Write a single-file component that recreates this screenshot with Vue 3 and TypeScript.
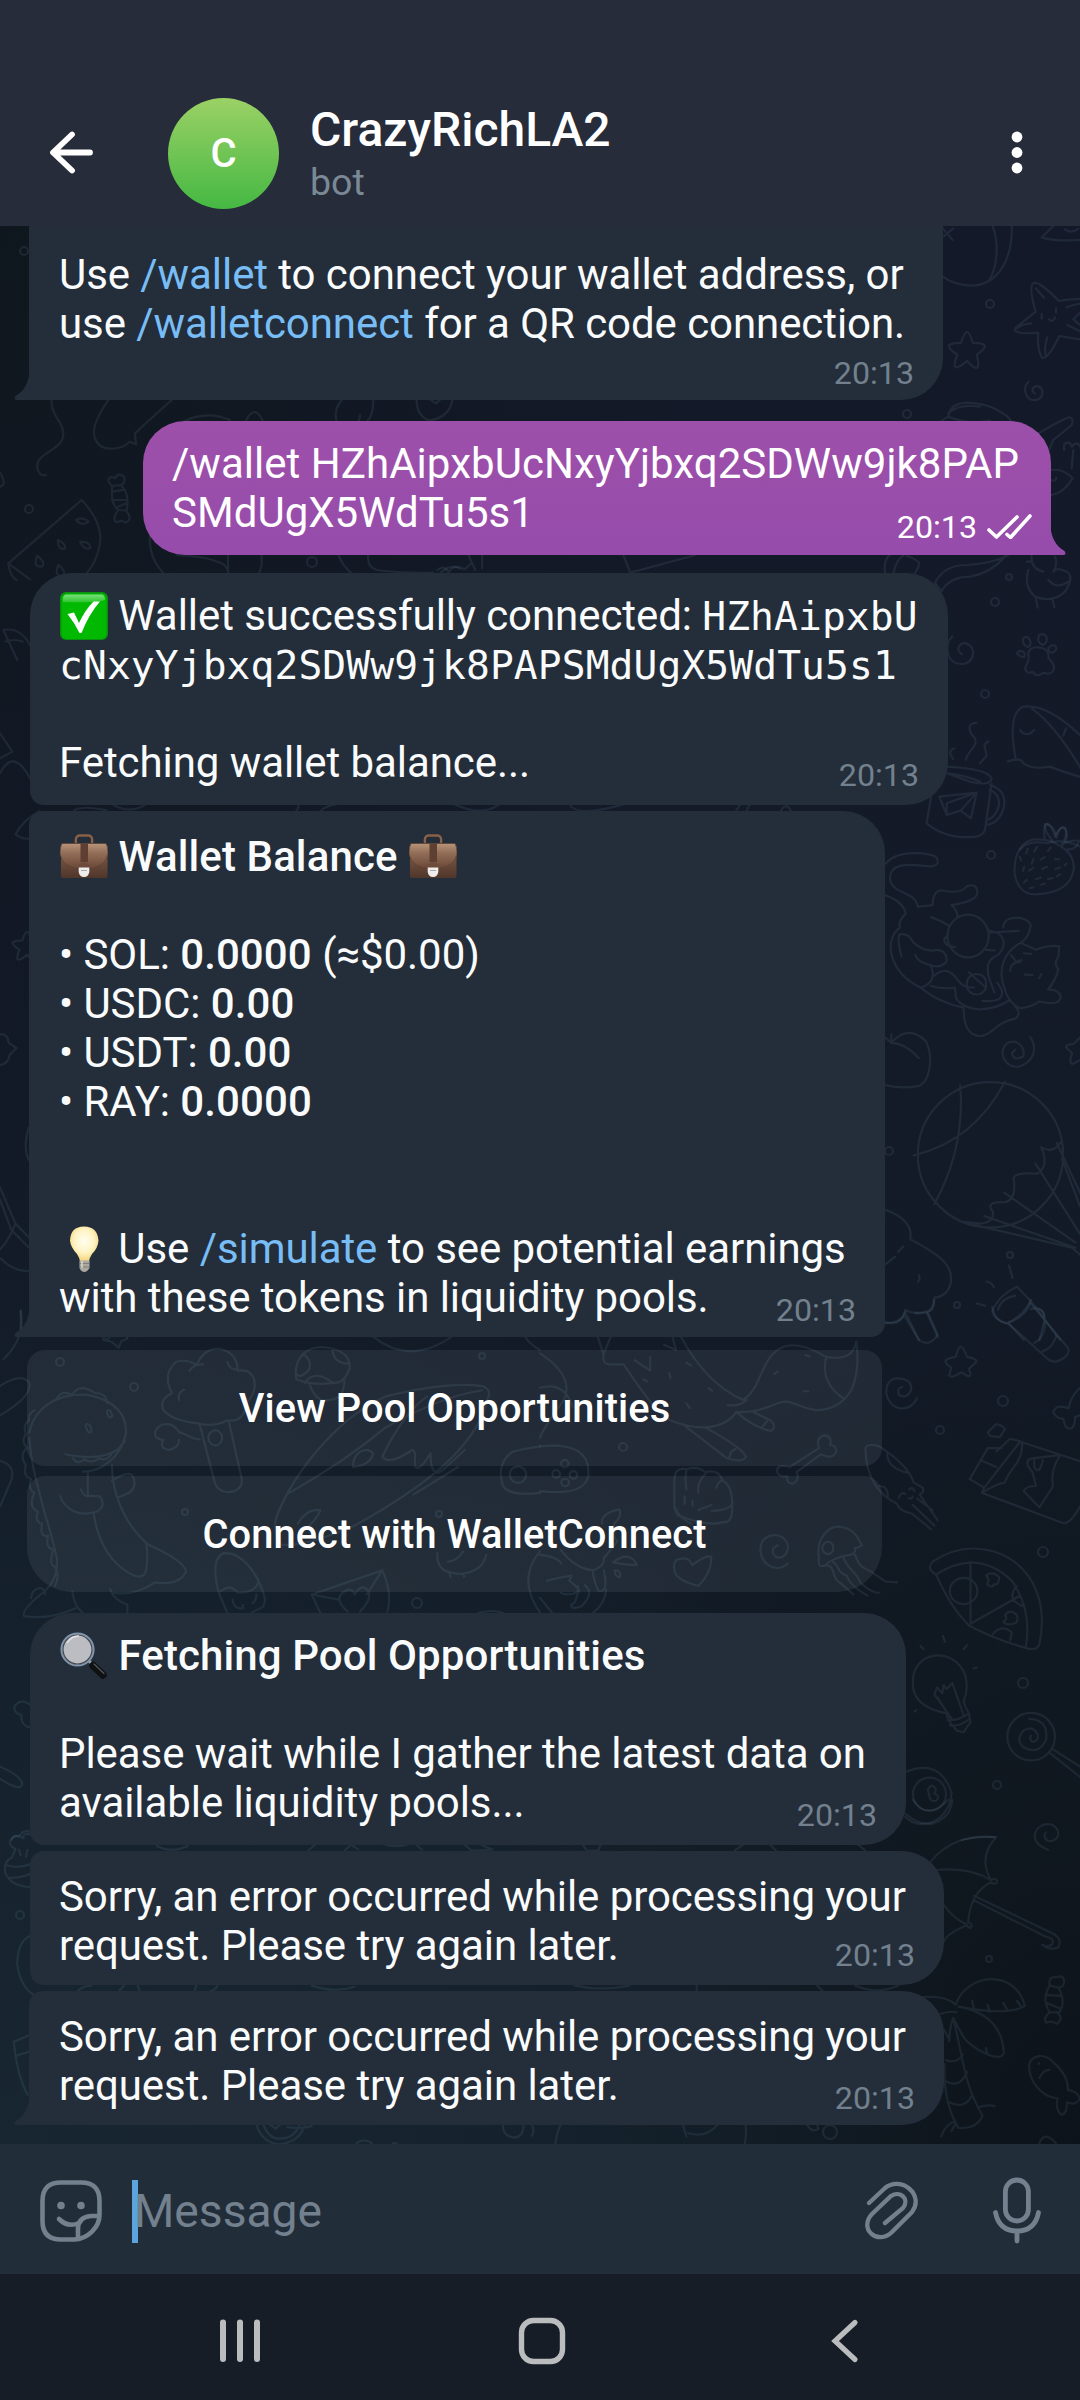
<script setup lang="ts">
type Kind = 'text' | 'bold' | 'link' | 'mono' | 'emoji'
interface Segment { kind: Kind; value: string }
interface Message {
  id: string
  lines: Segment[][]
  tail?: boolean
  outgoing?: boolean
  actions?: string[]
}

const t = (value: string): Segment => ({ kind: 'text', value })
const b = (value: string): Segment => ({ kind: 'bold', value })
const link = (value: string): Segment => ({ kind: 'link', value })
const mono = (value: string): Segment => ({ kind: 'mono', value })
const emoji = (value: string): Segment => ({ kind: 'emoji', value })

const time = '20:13'
const errorLines = [[t('Sorry, an error occurred while processing your')], [t('request. Please try again later.')]]

const messages: Message[] = [
  {
    id: 'intro', tail: true,
    lines: [
      [t('Use '), link('/wallet'), t(' to connect your wallet address, or')],
      [t('use '), link('/walletconnect'), t(' for a QR code connection.')],
    ],
  },
  {
    id: 'command', outgoing: true, tail: true,
    lines: [[t('/wallet HZhAipxbUcNxyYjbxq2SDWw9jk8PAP')], [t('SMdUgX5WdTu5s1')]],
  },
  {
    id: 'connected',
    lines: [
      [emoji('check'), t(' Wallet successfully connected: '), mono('HZhAipxbU')],
      [mono('cNxyYjbxq2SDWw9jk8PAPSMdUgX5WdTu5s1')],
      [],
      [t('Fetching wallet balance...')],
    ],
  },
  {
    id: 'balance', tail: true,
    lines: [
      [emoji('case'), b(' Wallet Balance '), emoji('case')],
      [],
      [t('• SOL: '), b('0.0000'), t(' (≈$0.00)')],
      [t('• USDC: '), b('0.00')],
      [t('• USDT: '), b('0.00')],
      [t('• RAY: '), b('0.0000')],
      [],
      [],
      [emoji('bulb'), t(' Use '), link('/simulate'), t(' to see potential earnings')],
      [t('with these tokens in liquidity pools.')],
    ],
    actions: ['View Pool Opportunities', 'Connect with WalletConnect'],
  },
  {
    id: 'pools',
    lines: [
      [emoji('lens'), b(' Fetching Pool Opportunities')],
      [],
      [t('Please wait while I gather the latest data on')],
      [t('available liquidity pools...')],
    ],
  },
  { id: 'error-first', lines: errorLines },
  { id: 'error-last', tail: true, lines: errorLines },
]

interface Doodle { at: string; d: string }
const spiral = 'M0 2C-6 -2 -2 -9 4 -7C12 -4 11 8 1 10C-13 11 -16 -6 -8 -13'
const star = 'M0 -15Q2 -15 5 -6Q15 -6 15 -3Q14 0 8 4Q11 14 8 15Q5 15 0 9Q-8 16 -10 14Q-11 11 -8 4Q-16 -1 -15 -4Q-13 -6 -5 -6Q-2 -15 0 -15Z'

// Wallpaper line art, grouped by region of the canvas.
const doodles: Doodle[] = [
  {
    at: 'translate(860 220) scale(.3333)',
    d: 'M455 10C460 110 420 190 340 197Q285 197 248 170M398 18C418 70 412 140 388 180M248 25l30 35M250 50l30-25M580 18L545 52Q590 65 660 60M615 28q20 15 40-2M520 190Q535 180 597 243Q640 235 665 238M520 190Q505 200 527 275L465 325Q460 345 535 338Q530 380 545 412Q560 425 598 348L670 360M527 205l25 28M470 325q20-14 45-15M562 352q-10 25-5 55M545 282v14M588 264v14M567 298q14 12 18-6M620 262q25-10 45-12M640 298l20-20M640 298l30 25M622 315l45 22',
  },
  {
    at: 'translate(880 390) scale(.3333)',
    d: 'M180 95L205 80Q210 40 260 38C330 38 385 75 395 95M205 70Q235 40 300 50M205 80Q270 105 330 92M475 130Q560 80 570 82Q582 85 575 105L520 150L505 185M553 180q-5-25 15-22l8 12q15-20 25 0M580 180l-5 55M513 270q15 5 16-7M515 240Q550 235 578 265Q550 310 515 315M165 580Q190 525 260 525Q340 520 385 495M165 580L185 603Q210 560 270 560Q330 550 375 500M15 550Q10 510 30 495M40 550Q50 505 70 498M80 498Q120 510 118 525L105 550M455 495Q450 535 490 545M525 500Q535 520 520 545M440 515l15 0M445 540Q430 590 465 620Q520 640 555 605Q585 560 560 545Q530 530 520 545M505 570Q530 600 565 575M468 628l5 25M518 630l5 22M458 845Q440 855 435 835Q450 805 445 795Q445 770 475 772Q510 775 505 805Q530 825 518 845Q510 855 490 848Q470 865 458 845ZM430 745q-5 20 15 26q12-10 2-25q-8-10-17-1ZM478 735q-10 22 10 30q18-10 10-27q-8-10-20-3ZM505 775q0 15 15 12q15-10 5-20q-15-3-20 8ZM410 790q10-14 23-1q5 15-10 11ZM408 1110Q380 970 430 950Q500 940 600 1035M455 955Q530 1010 605 1140M383 1115Q420 1100 430 1120Q460 1140 510 1130Q560 1150 600 1160M420 1020Q440 1045 462 1020M558 1015l-8 22M290 998C255 1000 270 1030 285 1045C295 1070 260 1085 258 1110M325 1055C300 1065 325 1085 318 1100L300 1120M223 1075q-15 5-12 18l8 14M195 1130Q320 1135 335 1165Q330 1190 270 1175L200 1150M205 1150Q255 1155 300 1175M155 1210L140 1300Q200 1350 290 1340Q310 1335 315 1320L335 1180M330 1185Q380 1200 372 1250Q360 1300 318 1305M328 1200Q362 1210 356 1250Q345 1285 320 1290M178 1220L290 1208L273 1285L242 1262L200 1275ZM290 1208L200 1240L200 1275M290 1208L242 1262M420 1380Q440 1350 500 1360Q550 1345 600 1370M520 1355Q490 1320 495 1302Q515 1300 525 1340Q540 1305 555 1315Q565 1335 545 1360',
  },
  {
    at: 'translate(0 390) scale(.3333)',
    d: 'M155 30C150 80 200 100 188 145C175 185 105 190 112 235Q118 260 138 255M325 30Q270 110 285 145C300 190 370 180 388 155L408 163L405 130Q470 70 515 30M550 95Q620 60 690 90M738 92Q765 40 788 92M1010 95Q1000 60 1025 30M1120 30Q1120 80 1100 95M1080 75q0 15-8 20M1250 30Q1250 80 1290 92Q1350 80 1357 30M1290 28l18 12l12-10M325 270Q330 255 345 265Q355 245 372 260Q378 280 362 285L335 288Q325 275 325 270ZM337 288Q330 340 355 360L380 362Q390 310 362 285M338 305l36-6M335 330l45 0M355 350l28-12M352 365Q335 390 350 397Q365 390 378 398Q400 385 378 362M25 520L245 330Q310 400 300 460Q290 520 255 555M25 520Q30 560 50 570M25 520L90 568M228 390q20-12 38 5q-20 15-38-5ZM173 450q25 10 22 25q-20 8-22-25ZM240 455q30 0 32 18q-20 10-32-18ZM112 497q25 20 15 32q-30 5-15-32ZM175 525q25 20 15 32q-30 5-15-32ZM0 248q15 25 10 35l-10 8M450 440Q445 500 490 550M530 495Q620 500 650 515Q680 520 685 548M684 495v50M785 495v30q-3 15-8 23M1015 495Q1030 530 1055 550M1105 495Q1100 530 1130 540Q1200 550 1300 548M1313 540q20-18 35 10M1345 548q15-25 35-12',
  },
  {
    at: 'translate(0 400) scale(.6888 .3333)',
    d: 'M5 690Q30 680 45 740M5 690L25 780M8 725q15-10 25 0M0 1120Q20 1040 45 1140M0 1000l18 55L0 1075M905 465L915 518L1010 465M640 518q15-30 35-10l10-20M680 465l10 45M700 465l0 40',
  },
  {
    at: 'translate(0 800) scale(.3444)',
    d: 'M45 100Q65 60 115 32M45 100Q65 115 85 112M215 30Q240 15 310 30M330 15Q380 40 420 15M860 32Q870 20 865 12M930 32Q950 15 980 12M1320 12Q1400 50 1450 12M0 680Q25 680 25 705L48 720L28 740Q25 765 0 770M84 950Q65 1010 84 1045M0 1125L45 1230Q25 1280 0 1305M45 1230L84 1270M0 1160L30 1240M0 1330Q40 1370 84 1368M30 1245L84 1300M60 1485v60M300 1560q40-30 70 0',
  },
  {
    at: 'translate(540 800) scale(.3444)',
    d: 'M85 12q20 40 160 0M570 30l12-18M600 30l10-18M700 30q15-25 28 0M1465 110Q1460 70 1475 70Q1495 80 1500 110Q1510 70 1525 82Q1540 110 1512 135Q1480 110 1430 115Q1375 130 1378 215Q1390 275 1440 274Q1540 270 1550 200Q1550 155 1512 135M1512 135Q1530 115 1565 118Q1560 145 1530 143M1412 155l4-14M1435 150l8-14M1475 148l8-10M1397 175l-4-10M1428 185l5-14M1453 174l12-8M1495 172h12M1402 206l4-12M1420 205l12-8M1458 200l14-6M1497 200l12-4M1524 190l5-6M1440 230l14-5M1475 229l14-2M1405 240l8-8M1422 256l10-2M1455 246l10-3M1500 222l10-6M1003 185C1040 140 1130 155 1150 165Q1165 190 1135 193C1070 185 1010 180 1017 235C1030 275 1090 265 1097 310L1140 305Q1140 265 1165 262Q1220 275 1240 250Q1270 240 1270 270Q1265 295 1195 305Q1215 325 1212 340M1003 277Q1055 295 1062 330Q1040 350 1045 370C995 410 1015 500 1105 545Q1155 530 1135 480Q1095 470 1090 450M1050 455Q1035 400 1045 390Q1070 385 1085 415Q1120 445 1155 435Q1185 440 1180 470Q1160 490 1135 480M1145 510C1180 480 1200 505 1215 525Q1230 545 1260 545M1135 540Q1170 550 1205 545L1208 575Q1225 605 1280 608Q1330 605 1365 580M1135 340Q1165 350 1188 365M1205 427Q1175 425 1173 405L1185 390M1183 395a60 62 0 1 0 120 0a60 62 0 1 0-120 0M1305 385L1390 380M1295 435l25 2M1305 380C1360 385 1355 440 1320 455Q1290 470 1305 520L1320 560M1345 370C1345 330 1420 335 1425 365Q1420 400 1395 415C1350 440 1325 490 1350 550Q1360 590 1395 605Q1430 600 1450 585Q1510 600 1512 570Q1505 550 1475 550Q1500 520 1505 490Q1490 475 1505 455L1508 425Q1480 420 1440 435Q1410 420 1395 415M1368 450l15 20l15-5M1395 470q-30 0-30 28M1405 445l22 2M1408 507l22 1M1450 517l6-12M1105 545Q1160 590 1230 603M1230 605Q1230 690 1285 685C1320 675 1325 645 1380 635Q1400 620 1380 600M1240 535a28 25 0 1 0 55 0a28 25 0 1 0-55 0M1245 500l50 45M1285 583Q1350 590 1340 550L1328 530M1003 690L1020 705Q1070 650 1120 700C1145 750 1130 820 1100 830Q1050 840 1003 828M1020 680V705Q1060 705 1100 750M1423 688C1460 740 1400 790 1365 770C1325 745 1345 695 1380 702Q1410 715 1403 745Q1375 760 1370 735L1380 725M1568 690L1550 708Q1525 710 1527 718L1545 735Q1535 760 1545 767L1568 755M1097 1030a211 211 0 1 0 422 0a211 211 0 1 0-422 0M1220 828Q1235 1010 1145 1173M1350 818Q1260 990 1085 1032M1515 990Q1490 1030 1455 1008Q1480 1060 1445 1085Q1375 1080 1375 1100Q1385 1160 1350 1168Q1290 1165 1315 1195Q1320 1225 1280 1230L1230 1225M1500 995L1568 1140M1438 1055L1568 1260M1348 1140L1555 1285M1290 1208L1555 1300M1235 1228Q1500 1290 1545 1300L1568 1320M1515 1040L1568 1180M1003 1190Q1085 1220 1075 1275C1160 1320 1200 1350 1193 1400Q1185 1440 1145 1445Q1145 1490 1120 1485Q1085 1495 1060 1480Q1055 1520 1003 1518M1060 1500L1100 1568M1123 1488L1155 1560M1100 1380q5 10-2 18M1003 1348l28-22M1040 1312l15-16M1362 1352l10 36M1296 1398q15 2 22 16M1268 1462l24 6M1385 1413Q1330 1440 1313 1485Q1320 1510 1355 1520Q1415 1500 1425 1455ZM1330 1480Q1340 1445 1380 1440M1425 1478Q1465 1470 1465 1510M1425 1455L1510 1568M1360 1520L1405 1568M1465 1510L1450 1568',
  },
  {
    at: 'translate(0 1300) scale(.3444)',
    d: 'M60 30Q75 110 10 172M300 115q15 0 18-8M300 115L325 122L345 138L352 120L370 112M1085 108Q1190 190 1310 108M1525 108Q1540 130 1568 145M0 250Q60 210 85 240Q95 280 0 335M0 467Q50 480 30 530L0 600M85 385C100 310 170 270 250 275C340 290 370 340 365 390C350 460 290 500 240 498M165 285Q180 260 210 275Q230 240 275 270Q310 270 312 300M190 448Q290 470 345 432L362 410M212 460Q225 480 245 463Q265 475 290 460Q310 470 325 445M100 320Q80 330 85 350Q65 360 75 390Q60 410 78 430Q55 450 75 480Q65 510 90 520Q80 550 100 560Q80 600 110 615Q100 645 122 650Q115 690 140 685Q130 720 155 725Q140 770 160 775Q175 800 160 830M85 400C90 480 110 540 130 620Q150 680 165 750Q170 810 130 845Q60 900 70 918Q140 930 220 895M325 480C325 560 360 650 430 710Q540 760 540 790Q520 830 450 820Q390 860 330 850M255 500v68L290 570Q310 600 280 615C230 630 190 610 175 570M235 550q10 25 25 18M325 525Q370 495 385 510Q400 540 375 560L345 573M272 620Q290 740 370 790Q420 820 425 780Q430 740 425 710M210 845Q215 890 240 908M320 840Q330 870 370 885V908M90 865q5-30 30-28q15 8 10 18M248 365q5-10 14 0l4 15q-5 10-12 0ZM310 325q5-10 12 0l4 12q-5 8-12 0ZM575 358Q500 350 475 320Q460 290 500 270Q470 220 510 180Q540 170 570 188Q600 130 650 145Q690 160 690 205Q740 200 740 250Q735 280 715 300Q710 355 660 350Q620 370 575 358M550 205q15-20 40-18M520 290q-5-20 15-30M660 180q5 20 25 22M580 362L625 535Q640 565 680 555Q705 545 702 520L665 355M605 400a20 22 0 1 0 40 0a20 22 0 1 0-40 0M580 405C540 400 530 380 520 385Q505 355 470 362Q440 380 455 400Q475 410 475 405Q460 430 490 435Q520 430 520 405M860 230C850 160 900 130 950 138Q1020 150 1015 200Q1000 240 975 240Q910 250 860 230ZM880 155Q910 180 895 205Q870 230 862 215M965 145Q970 185 1012 185M885 240Q915 200 965 240M900 248Q920 300 955 290Q1000 290 1000 230M800 640C830 540 960 350 1120 280Q1300 235 1400 250Q1430 260 1415 290C1380 440 1200 560 1030 655Q880 720 815 710Q795 690 800 640M840 560Q1000 470 1120 370Q1280 280 1400 262M1025 485Q1025 440 1065 435Q1090 440 1080 455Q1070 480 1025 485ZM1110 455Q1170 330 1240 280M1110 455Q1130 480 1190 440Q1200 430 1205 445V475Q1205 500 1230 475L1250 445Q1250 520 1285 495L1350 435M865 650Q890 605 930 610Q920 640 870 680M1200 565L1330 485M1460 540Q1440 470 1490 440Q1530 430 1568 425M1460 540Q1480 570 1568 560M1480 507a24 24 0 1 0 48 0a24 24 0 1 0-48 0M635 850Q610 750 650 735C700 730 750 790 770 870L765 890L730 908M635 850Q670 820 690 850Q740 850 750 820M635 850L660 908M675 870q5 30 30 25V885M745 855q-2 20-12 25M905 855L1110 785Q1140 850 1125 905M905 855L930 908M905 855L985 870M1110 785L1065 855M1010 905Q970 870 995 850Q1020 830 1030 855Q1050 820 1070 845Q1080 870 1045 905M1270 735C1265 790 1310 795 1340 795Q1400 790 1412 740M1300 760q25 0 45-30M1305 795l3 10M1345 795l3 8M1568 730Q1500 810 1568 908M1390 908q40-10 70 0M85 1240Q60 1235 62 1205Q40 1200 42 1180Q60 1155 88 1175M0 1355Q60 1380 65 1405Q60 1430 0 1390M35 1568q0-15 20-10q10-20 30-15',
  },
  {
    at: 'translate(540 1300) scale(.3444)',
    d: 'M168 108L185 160Q180 185 200 187H243M205 108L185 155M360 130L395 145L385 108M410 108C460 200 520 260 590 290C640 260 640 180 690 145Q740 110 830 165Q910 180 918 120Q930 200 905 260Q870 320 800 320C740 310 730 285 690 300Q620 330 570 325M243 187C300 270 340 330 380 350Q430 370 475 370M545 305Q580 310 600 290M830 170Q815 240 880 285M275 175L320 205V165M420 365L540 458Q590 475 598 455Q590 430 480 370Q545 365 570 325M550 458q0-18 18-25M570 325Q620 370 670 380Q690 370 670 350L620 325M645 370l15-20M300 230l12 6M375 212l4 14M425 182l14 8M490 256l10 8M425 300l10 14M680 215l10-8M765 265h14M770 160l14 4M0 155Q100 220 70 290Q10 370 0 400M0 255Q70 235 95 310M0 425Q150 410 140 510Q130 570 0 555M61 475a11 11 0 1 0 22 0a11 11 0 1 0-22 0M36 505a11 11 0 1 0 22 0a11 11 0 1 0-22 0M86 508a11 11 0 1 0 22 0a11 11 0 1 0-22 0M62 530a11 11 0 1 0 22 0a11 11 0 1 0-22 0M725 485Q690 475 688 495Q690 515 718 512Q715 535 735 533Q755 520 745 500L815 448Q850 465 860 440Q860 420 842 422Q850 395 825 393Q800 400 810 430ZM395 500Q410 485 425 492Q455 480 480 500Q520 490 530 525Q560 540 558 600Q560 650 530 645Q490 660 400 625L390 605V520ZM425 495Q420 520 425 550M480 505Q455 530 460 560M530 522Q515 530 512 545M420 570v22M443 582v15M460 610l38-15M498 612Q550 610 560 590M395 605Q400 630 440 650M395 755Q430 740 442 770Q480 740 497 745Q500 790 460 830Q400 815 392 790Q385 770 395 755ZM720 765C680 800 630 760 642 710C655 670 720 675 720 720Q715 750 690 748Q670 740 678 720L690 712M810 750C800 690 840 655 870 658C920 665 925 700 935 712Q925 720 915 720Q920 740 885 742Q830 760 830 770Q805 780 810 750ZM820 720a16 18 0 1 0 32 0a16 18 0 1 0-32 0M830 770C860 770 845 810 870 820L910 855M850 760C870 770 860 790 890 800Q900 830 950 858M880 745C890 780 920 790 930 820Q960 850 985 850M915 740C930 790 960 780 970 795L1005 818L1037 820M180 650Q175 620 230 608Q240 625 215 650Q210 690 225 700L185 750Q190 770 155 785Q100 780 60 725M0 740Q50 745 62 765M212 762Q260 725 282 770Q250 770 212 762ZM217 785q20 0 15 20q-15 0-15-20M155 785Q150 800 170 845Q200 850 185 785M20 815Q60 805 92 800L85 815Q130 850 105 850Q80 860 60 850M130 828Q160 850 120 890Q90 900 90 885Q110 880 110 830M0 865L35 908M155 908Q190 880 192 840M945 430Q950 415 985 425Q1070 480 1085 530L1112 545Q1115 560 1102 565L1155 640M945 430C945 520 990 570 1035 590Q1045 615 1080 620L1135 665M1008 447Q1010 490 1070 502M985 540Q1010 540 1010 570M1042 575q5-20 18-12M1072 550q10-10 15 5M1070 575q10 5 12-5M1095 577L1140 610M1082 595L1145 655M1095 285Q1080 315 1050 315C1000 310 990 240 1030 228Q1080 225 1078 260Q1065 290 1042 275Q1035 255 1052 253M1003 65Q1050 75 1060 35M1060 35L1100 115Q1130 140 1155 100L1125 35Q1145 20 1143 0M1090 38Q1110 40 1125 35M1313 20Q1320 60 1355 68Q1410 40 1425 0M1360 68L1475 172Q1500 190 1530 160Q1540 145 1530 135L1425 10M1430 20Q1465 25 1465 50M1435 125Q1465 110 1467 65M1458 150Q1490 140 1500 100M1222 135Q1228 135 1240 165Q1270 170 1267 180L1245 200Q1255 220 1245 222L1222 210Q1195 230 1188 218Q1195 200 1193 195Q1175 185 1178 175Q1180 170 1207 165Q1215 135 1222 135ZM1568 255Q1540 280 1535 315Q1500 300 1490 325Q1500 345 1520 345Q1525 380 1545 372Q1555 360 1553 340L1568 335M1300 385L1325 360Q1345 365 1350 375L1335 398L1308 395ZM1300 430L1248 520L1290 545L1395 410L1365 403L1325 440M1300 430H1340M1280 465L1325 485M1390 410L1568 468M1290 545L1283 560L1520 648Q1540 650 1568 600M1400 415C1400 480 1360 490 1350 530Q1330 530 1283 560M1510 450Q1480 500 1490 540L1450 602L1405 555Q1410 540 1440 540L1430 500Q1400 465 1430 460L1510 450M1435 465v20q15 25 25-20M1150 797Q1120 780 1140 760C1280 660 1500 760 1450 1000Q1440 1020 1410 1010Q1430 900 1370 815Q1270 720 1150 797ZM1150 797Q1190 890 1245 945Q1320 985 1410 1010M1250 760V940L1395 858M1190 845a40 38 0 1 0 80 0a40 38 0 1 0-80 0M1315 970Q1340 940 1370 965L1365 988M1385 830Q1350 870 1405 890M1295 800q20-15 38 5q0 25-15 20q-5 15-20 0q10-15-3-25ZM1350 915q15-20 35 0q5 25-12 25q-20 5-28-5q15-10 5-20ZM1083 1110C1080 1020 1200 1000 1235 1090Q1245 1130 1230 1165Q1235 1185 1245 1200L1250 1225L1230 1255L1210 1250L1185 1220L1180 1200C1120 1190 1080 1160 1083 1110ZM1195 1215L1145 1145L1153 1125L1168 1142L1172 1118L1180 1130L1197 1112L1230 1205M1155 1155L1190 1212M1185 1220Q1220 1220 1245 1200M1190 1235Q1220 1240 1248 1215M1170 975l6 18M1105 1005l9 9M1230 1014l10-12M1258 1070l10-3M1088 1195l5-4M1357 1268a69 69 0 1 0 138 0a69 69 0 1 0-138 0M1425 1265q-5 12 5 18q18 0 15-22q-15-28-42-10q-25 30 5 50q40 20 62-25q5-60-50-60M1480 1315L1568 1385M1490 1305L1568 1355M1063 1370Q1160 1330 1195 1430C1190 1510 1110 1550 1060 1500M1083 1435a48 48 0 1 0 96 0a48 48 0 1 0-96 0M1130 1435q-10-20 10-25q15 10 5 22q20 10 5 22q-20 5-20-19ZM1225 1568Q1280 1555 1320 1560',
  },
  {
    at: 'translate(0 1800) scale(.3444 .3827)',
    d: 'M88 90Q65 85 68 100Q45 85 30 105Q25 120 45 128L35 150Q10 160 15 190Q30 225 88 228M15 170Q50 180 88 168M25 203Q60 205 88 193M55 130l5 15M80 130l-5 18M88 355Q50 370 50 430Q60 490 100 510M225 500Q240 485 265 485M345 500L360 485M400 485l5 14M565 500l5-15M610 500Q630 495 630 485M84 615L40 632Q50 720 80 770M48 668L84 658M455 120Q500 140 545 120M895 132l20-15M1000 132l20-15l20 12M1120 118q30 5 60 0M1210 118l15 12M1350 118L1370 132L1430 130L1400 118M905 485Q970 505 1030 488M745 849Q760 895 810 900Q870 895 885 849M765 849Q780 885 810 885Q855 885 870 849M785 849l15 10l12-10M835 855Q870 860 905 852M1035 897q20-15 45 0M1140 897l12 0M1460 849Q1460 880 1495 882Q1520 880 1520 850M1545 849q8 15 0 28',
  },
  {
    at: 'translate(540 1800) scale(.3444 .3827)',
    d: 'M125 118l10 14h35l5-14M565 132l25-15M670 118l15 14M925 118l20 14M100 485Q180 500 260 485M455 485v14M805 485l15 14M915 485Q980 510 1040 485M1060 35Q1130 90 1185 35Q1195 15 1197 0M1083 0Q1125 55 1185 0M1475 130Q1430 115 1438 85C1450 55 1505 55 1505 90Q1500 110 1475 107Q1460 98 1468 85M1130 165C1180 110 1240 90 1325 97Q1270 150 1310 210Q1325 200 1328 213Q1322 225 1310 215Q1250 240 1243 320Q1260 325 1250 335L1238 328Q1180 350 1173 370M1150 183Q1250 175 1310 210M1173 275Q1200 310 1238 325M1260 250L1480 345Q1520 360 1505 385Q1480 395 1458 378Q1475 385 1487 378Q1495 360 1470 358L1260 262M1480 485Q1475 460 1500 463Q1520 455 1522 475Q1520 490 1505 490Q1530 530 1505 558Q1520 575 1500 585Q1485 575 1470 582Q1460 570 1480 555Q1455 520 1480 485ZM1480 485L1505 490M1475 510L1515 512M1470 530L1510 545M1480 555H1505M1105 515Q1180 510 1207 535C1240 450 1380 440 1408 538Q1360 565 1215 540Q1340 560 1347 660Q1340 680 1300 665Q1240 640 1225 612M1160 560q30-10 50-5M1173 600L1188 625M1188 630Q1190 590 1200 570L1225 612M1200 570C1230 680 1230 740 1285 825Q1270 860 1215 857Q1170 790 1175 690M1178 680Q1210 690 1228 665M1178 735Q1220 755 1240 710M1188 790Q1235 810 1255 770M1255 525l5 22M1300 535l5 18M1345 530l12 18M1385 525l12 15M1295 648l3 12M1165 878Q1180 845 1205 840M1195 865l12-20M1275 802Q1300 795 1320 800M1420 695C1425 665 1465 660 1490 685Q1535 720 1533 758Q1560 760 1568 780Q1555 800 1530 790Q1530 820 1515 823Q1495 810 1503 780C1450 775 1420 730 1420 695ZM1450 727Q1460 705 1480 705M1448 687v3M45 897Q50 865 60 849M595 897Q600 870 597 849M415 849L425 880M430 870Q480 885 515 849M775 849Q790 870 808 860L805 849M1450 897q15-35 48 0',
  },
]

const stamps = [
  { x: 1035, y: 392, s: .8, d: spiral }, { x: 962, y: 652, s: 1.2, d: spiral },
  { x: 967, y: 350, s: 1.2, d: star }, { x: 27, y: 946, s: .95, d: star },
]

const dots: [number, number, number][] = [
  [990, 304, 4], [907, 414, 4], [1009, 577, 3], [995, 602, 4], [985, 694, 4], [991, 855, 4],
  [889, 1151, 4], [1010, 1255, 3], [957, 1305, 3], [24, 251, 4], [29, 509, 4], [312, 562, 5],
  [1003, 1401, 5], [940, 1430, 4], [1043, 1552, 5], [1023, 1683, 5], [997, 1785, 4],
  [60, 1362, 4], [134, 1387, 4], [185, 1512, 3], [417, 1603, 5], [482, 1356, 3], [439, 1514, 3],
  [623, 1447, 4], [20, 1915, 4], [989, 1959, 3], [830, 2132, 7],
]
</script>

<template>
  <div class="screen">
    <header class="topbar">
      <svg class="back" viewBox="0 0 46 44" width="46" height="44">
        <path d="M24 3.500L5 21.500L24 39.500M6 21.500H42" fill="none" stroke="#fff" stroke-width="5.8" stroke-linecap="round" stroke-linejoin="round" />
      </svg>
      <div class="avatar">C</div>
      <div class="peer">
        <div class="name">CrazyRichLA2</div>
        <div class="status">bot</div>
      </div>
      <svg class="more" viewBox="0 0 12 44" width="12" height="44">
        <circle cx="6" cy="6" r="5.4" fill="#fff" /><circle cx="6" cy="21.500" r="5.4" fill="#fff" /><circle cx="6" cy="37" r="5.4" fill="#fff" />
      </svg>
    </header>

    <main class="chat">
      <svg class="wallpaper" viewBox="0 226 1080 1918" width="1080" height="1918" aria-hidden="true">
        <path v-for="item in doodles" :key="item.at" :transform="item.at" :d="item.d" />
        <path v-for="p in stamps" :key="p.x" :transform="`translate(${p.x} ${p.y}) scale(${p.s})`" :d="p.d" />
        <circle v-for="c in dots" :key="c[0] * 3000 + c[1]" :cx="c[0]" :cy="c[1]" :r="c[2]" />
      </svg>

      <div class="thread">
        <template v-for="m in messages" :key="m.id">
          <section class="bubble" :class="[m.id, { outgoing: m.outgoing, tailed: m.tail }]">
            <div v-for="(line, i) in m.lines" :key="i" class="line">
              <template v-for="(seg, j) in line" :key="j">
                <template v-if="seg.kind === 'emoji'">
                  <svg v-if="seg.value === 'check'" class="emoji" viewBox="0 0 48 48">
                    <defs><linearGradient id="gloss" x1="0" y1="0" x2="0" y2="1"><stop offset="0" stop-color="#7be07b" /><stop offset="1" stop-color="#2ec52e" /></linearGradient></defs>
                    <rect width="48" height="48" rx="6" fill="#0a8f10" /><rect x="1.5" y="1.5" width="45" height="45.5" rx="5" fill="#00b900" />
                    <path d="M6 2.5H42Q45 3 45 8Q38 11 3 10Q2 3 6 2.5Z" fill="url(#gloss)" />
                    <path d="M7.5 22L14 20.5L19 31Q25 18 33.5 9.500H40Q29 22 21.500 41H19.500Q14 30 7.500 22Z" fill="#fff" />
                  </svg>
                  <svg v-else-if="seg.value === 'case'" class="emoji" viewBox="0 0 48 48">
                    <defs>
                      <linearGradient id="hide" x1="0" y1="0" x2="0" y2="1"><stop offset="0" stop-color="#b89479" /><stop offset=".35" stop-color="#94705a" /><stop offset="1" stop-color="#684535" /></linearGradient>
                      <linearGradient id="base" x1="0" y1="0" x2="0" y2="1"><stop offset="0" stop-color="#8a6651" /><stop offset="1" stop-color="#50352a" /></linearGradient>
                    </defs>
                    <path d="M16 10Q15 3 19 2.500H29Q33 3 32 10" fill="none" stroke="#8a6047" stroke-width="2.400" />
                    <rect x="1" y="12" width="46.500" height="33" rx="2" fill="url(#base)" />
                    <path d="M2 10.500H46Q48 13.500 48 21Q45 36 24 36Q3 36 0 21Q0 13.500 2 10.500Z" fill="url(#hide)" stroke="#5a3d30" stroke-width=".7" />
                    <path d="M20.500 10.500H28V29H20.500Z" fill="#5e3f31" /><path d="M18.500 34Q18.500 29.500 24 29.500Q29.500 29.500 29.500 34Z" fill="#6d4a3a" />
                    <path d="M18.700 34.500H29.300V39Q28.500 44 24 44Q19.500 44 18.700 39Z" fill="#efedeb" /><path d="M21 37.500H27" stroke="#aaa" />
                  </svg>
                  <svg v-else-if="seg.value === 'bulb'" class="emoji" viewBox="0 0 48 48">
                    <defs><radialGradient id="glow" cx=".5" cy=".42" r=".58"><stop offset="0" stop-color="#fffef2" /><stop offset=".6" stop-color="#fff3c2" /><stop offset="1" stop-color="#f3d57c" /></radialGradient></defs>
                    <path d="M10 15.500Q10.500 1.500 24 1.500Q37.500 1.500 38.500 15.500Q38 23 32 29Q29.500 33 29 36H20Q19.500 33 17 29Q10.500 22 10 15.500Z" fill="url(#glow)" />
                    <path d="M19.500 35.500H29.500V43Q27 47 24.500 47Q21 47 19.500 43Z" fill="#aba9a0" /><path d="M20 38.500H29M20 42H29" stroke="#817f78" stroke-width="1.200" /><path d="M22 36V43" stroke="#d8d6ce" stroke-width="1.500" />
                  </svg>
                  <svg v-else class="emoji" viewBox="0 0 48 48">
                    <path d="M29 29L34 34" stroke="#a5a9ae" stroke-width="3" /><path d="M33 33.500L43 43" stroke="#101113" stroke-width="7.500" stroke-linecap="round" /><path d="M34 32L44 41.500" stroke="#55585c" stroke-width="1.200" stroke-linecap="round" />
                    <circle cx="17.500" cy="17.500" r="16" fill="#bcbdc2" stroke="#7f95ad" stroke-width="2.200" /><circle cx="17.500" cy="17.500" r="14.500" fill="none" stroke="#46494d" stroke-width="1.200" /><path d="M7 11Q11 4 19 4" fill="none" stroke="#dfe2e6" stroke-width="1.500" />
                  </svg>
                </template>
                <span v-else :class="seg.kind">{{ seg.value }}</span>
              </template>
            </div>
            <div class="meta">
              <span>{{ time }}</span>
              <svg v-if="m.outgoing" class="ticks" viewBox="0 0 46 26" width="46" height="26">
                <path d="M3 17L10.500 24L31 4M21 21.500L24.500 24.500L44 3" fill="none" stroke="#fff" stroke-width="3.600" stroke-linecap="round" stroke-linejoin="round" />
              </svg>
            </div>
            <svg v-if="m.tail" class="tail" viewBox="0 0 16 32" width="16" height="32"><path d="M16 0C15 15 10 23 1.500 28Q-1 32 3 32H16Z" /></svg>
          </section>
          <div v-if="m.actions" class="actions">
            <button v-for="label in m.actions" :key="label" type="button">{{ label }}</button>
          </div>
        </template>
      </div>
    </main>

    <div class="composer">
      <svg class="sticker" viewBox="0 0 62 62" width="62" height="62" fill="none" stroke="#73808e" stroke-width="4.600" stroke-linecap="round" stroke-linejoin="round">
        <path d="M59.500 31V21Q59.500 2.500 41 2.500H21Q2.500 2.500 2.500 21V41Q2.500 59.500 21 59.500H34C48 59 59.500 47 59.500 35V31" />
        <path d="M59 36H51Q38 37 38 49V58" /><path d="M19 39Q28 48 39 43" />
        <circle cx="21" cy="25.500" r="3.800" fill="#73808e" stroke="none" /><circle cx="41" cy="25.500" r="3.800" fill="#73808e" stroke="none" />
      </svg>
      <div class="field"><i class="caret"></i><span>Message</span></div>
      <svg class="clip" viewBox="0 0 54 62" width="54" height="62" fill="none" stroke="#73808e" stroke-width="4.300" stroke-linecap="round">
        <path d="M4 23L20 8C36-5 60 15 47 32L27 52C13 66-7 49 7 34L26 16C35 10 45 19 38 28L20 43" />
      </svg>
      <svg class="mic" viewBox="0 0 50 68" width="50" height="68" fill="none" stroke="#73808e" stroke-width="4.800" stroke-linecap="round">
        <rect x="13.400" y="3" width="23" height="41" rx="11.500" /><path d="M3.500 35.500Q7 54 25 54Q43 54 46.500 35.500M25 54V64" />
      </svg>
    </div>

    <nav class="system">
      <svg viewBox="0 0 42 46" width="42" height="46" stroke="#bbbcbe" stroke-width="6" stroke-linecap="round"><path d="M4 4.500V41M21 4.500V41M38 4.500V41" /></svg>
      <svg class="home" viewBox="0 0 48 48" width="48" height="48" fill="none" stroke="#bbbcbe" stroke-width="5.400"><rect x="3.500" y="3.500" width="41" height="41" rx="12" /></svg>
      <svg viewBox="0 0 30 46" width="30" height="46" fill="none" stroke="#bbbcbe" stroke-width="5.200" stroke-linecap="round"><path d="M25 4.500L5 23L25 41.500" /></svg>
    </nav>
  </div>
</template>

<style>
body { background: #171d27; }
</style>

<style scoped>
.screen {
  width: 1080px; height: 2400px; overflow: hidden;
  display: flex; flex-direction: column;
  font-family: Roboto, "Liberation Sans", sans-serif; color: #fafbfc;
}
.topbar {
  box-sizing: border-box; flex: none; height: 226px; padding: 80px 57px 0 48px;
  display: flex; align-items: center; background: #262c39;
}
.back { margin-right: 74px; }
.avatar {
  width: 111px; height: 111px; border-radius: 50%; margin-top: 1px;
  background: linear-gradient(#9bd165, #45b843);
  display: flex; align-items: center; justify-content: center;
  color: #fff; font-size: 40px; font-weight: 500;
}
.peer { margin-left: 31px; flex: 1; }
.name { font-size: 48px; line-height: 56px; font-weight: 500; color: #fff; }
.status { font-size: 37.5px; line-height: 44px; color: #7a8995; margin-top: 2px; }

.chat {
  flex: none; height: 1918px; display: grid; overflow: hidden;
  background:
    radial-gradient(ellipse 960px 950px at 0 100%, #182632, rgba(24, 38, 50, 0)),
    radial-gradient(ellipse 700px 1000px at 0 0, #0f171e, rgba(15, 23, 30, 0)),
    radial-gradient(ellipse 640px 900px at 100% 100%, #0d131a, rgba(13, 19, 26, 0)),
    linear-gradient(#131928, #131a28 48%, #121b26 65%, #13202a);
}
.chat > * { grid-area: 1 / 1; }
.wallpaper { fill: none; stroke: rgba(150, 185, 215, .1); stroke-width: 2.2px; stroke-linecap: round; stroke-linejoin: round; }
.wallpaper * { vector-effect: non-scaling-stroke; }

.thread { position: relative; display: flex; flex-direction: column; align-items: flex-start; }
.bubble {
  --fill: #232e3a;
  position: relative; box-sizing: border-box; flex: none;
  padding: 18px 29px 18px 29px; margin-left: 30px;
  background: var(--fill); display: flex; flex-direction: column;
  border-radius: 42px 42px 42px 14px;
}
.line { flex: none; height: 49px; line-height: 49px; font-size: 42px; letter-spacing: -.07px; white-space: pre; }
.bold { font-weight: 500; letter-spacing: .1px; }
.link { color: #78bdf5; }
.mono { font-family: "DejaVu Sans Mono", "Liberation Mono", monospace; font-size: 39.6px; line-height: 1; letter-spacing: .11px; }
.emoji { width: 48px; height: 48px; margin: 0 0 0 1px; vertical-align: -10px; }
.meta {
  flex: none; align-self: flex-end; display: flex; align-items: center; gap: 9px;
  height: 38px; margin: -31px 0 0; font-size: 32.2px; line-height: 38px; color: #73808e;
}
.tail { position: absolute; left: -15px; bottom: 0; fill: var(--fill); }

.intro { width: 914px; height: 174px; margin-left: 29px; padding-top: 24px; padding-left: 30px; border-radius: 0 0 42px 0; }
.intro .meta { margin-top: 6px; }
.command {
  --fill: #964cab;
  width: 908px; height: 134px; margin: 21px 0 0 143px; padding-right: 19px; border-radius: 42px 42px 0 42px;
  background: linear-gradient(#9d50aa, #964cab); color: #fff;
}
.command .line { letter-spacing: .03px; }
.command .meta { color: #fff; margin-top: -29px; }
.command .tail { left: auto; right: -15px; transform: scaleX(-1); }
.ticks { position: relative; top: -1px; }
.connected { width: 918px; height: 232px; margin-top: 18px; }
.balance { width: 856px; height: 526px; margin: 6px 0 0 29px; padding-top: 21px; padding-left: 30px; border-radius: 14px 42px 14px 0; }
.pools { width: 876px; height: 232px; margin-top: 21px; }
.error-first { width: 914px; height: 134px; margin-top: 6px; padding-top: 21px; border-radius: 14px 42px 42px 14px; }
.error-last { width: 915px; height: 134px; margin: 6px 0 0 29px; padding-top: 21px; padding-left: 30px; border-radius: 14px 42px 42px 0; }
.error-first .meta { margin-top: -34px; }

.actions { margin: 13px 0 0 27px; width: 855px; display: flex; flex-direction: column; gap: 10px; }
.actions button {
  height: 116px; border: 0; padding: 0; border-radius: 18px;
  background: rgba(225, 240, 255, .075); color: #fff;
  font: 500 39.8px/118px Roboto, "Liberation Sans", sans-serif; letter-spacing: .08px;
}
.actions button:last-child { border-radius: 18px 18px 45px 45px; }

.composer {
  box-sizing: border-box; flex: none; height: 130px; padding: 4px 38px 0 40px;
  display: flex; align-items: center; background: #222d3a;
}
.field { flex: 1; display: flex; align-items: center; margin-left: 30px; font-size: 46.2px; line-height: 54px; color: #73808e; }
.caret { width: 6px; height: 63px; background: #5ba4de; margin-right: -4px; }
.clip { margin-right: 73px; }

.system { flex: 1; display: flex; align-items: center; justify-content: space-between; padding: 7px 220px 0 219px; background: #171d27; }
.home { margin-right: 7px; }
</style>
